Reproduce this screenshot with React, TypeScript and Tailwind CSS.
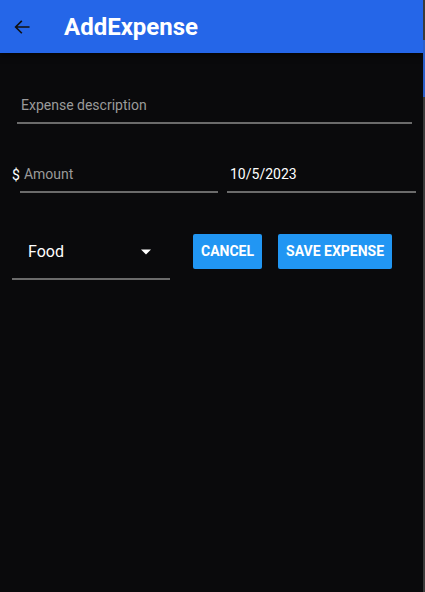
export default function App() {
  return (
    <div
      className="flex h-[592px] w-[425px] overflow-hidden bg-[#0a0a0c] text-white"
      style={{ fontFamily: 'Roboto, "Liberation Sans", sans-serif' }}
    >
      <div className="flex min-w-0 flex-1 flex-col">
        <header className="flex h-[53px] items-center bg-[#2566e8] shadow-[0_2px_6px_rgba(0,0,0,0.6)]">
          <svg
            className="ml-[13px] h-[18px] w-[18px]"
            viewBox="0 0 24 24"
            fill="none"
            stroke="#111"
            strokeWidth="2.2"
            strokeLinecap="square"
          >
            <path d="M21 12H4M11 4.5 3.5 12l7.5 7.5" />
          </svg>
          <h1 className="ml-[33px] pt-[1px] text-[24px] font-bold">AddExpense</h1>
        </header>

        <div className="ml-[17px] mt-[42px] w-[395px] border-b-2 border-[#6b6b6b] pb-[7px] pl-1 text-[14px] leading-[20px] text-[#9a9a9a]">
          Expense description
        </div>

        <div className="mt-[40px] flex items-end pl-3 pr-[7px]">
          <div className="flex w-[206px] items-end">
            <span className="pb-[8px] text-[14px] leading-[20px] text-white">$</span>
            <div className="flex-1 border-b-2 border-[#6b6b6b] pb-[7px] pl-1 text-[14px] leading-[20px] text-[#9a9a9a]">
              Amount
            </div>
          </div>
          <div className="ml-[9px] flex-1 border-b-2 border-[#6b6b6b] pb-[7px] pl-[3px] text-[14px] leading-[20px] text-white">
            10/5/2023
          </div>
        </div>

        <div className="mt-[41px] flex items-start pl-3">
          <div className="flex h-[46px] w-[158px] items-start justify-between border-b-2 border-[#6b6b6b] pl-4 pr-[19px] pt-[8px]">
            <span className="text-[16px] leading-[20px]">Food</span>
            <svg className="mt-[7px] h-[6px] w-[10px]" viewBox="0 0 10 5" fill="white">
              <path d="M0 0h10L5 5z" />
            </svg>
          </div>
          <button className="ml-[23px] h-[35px] rounded-[2px] bg-[#2196f3] px-[8px] text-[14px] font-bold text-white">
            CANCEL
          </button>
          <button className="ml-4 h-[35px] rounded-[2px] bg-[#2196f3] px-[8px] text-[14px] font-bold text-white">
            SAVE EXPENSE
          </button>
        </div>
      </div>
      <div className="flex w-[2px] flex-col bg-[#3a3a3a]">
        <div className="mt-[40px] h-[57px] bg-[#2b5fc9]" />
      </div>
    </div>
  );
}
